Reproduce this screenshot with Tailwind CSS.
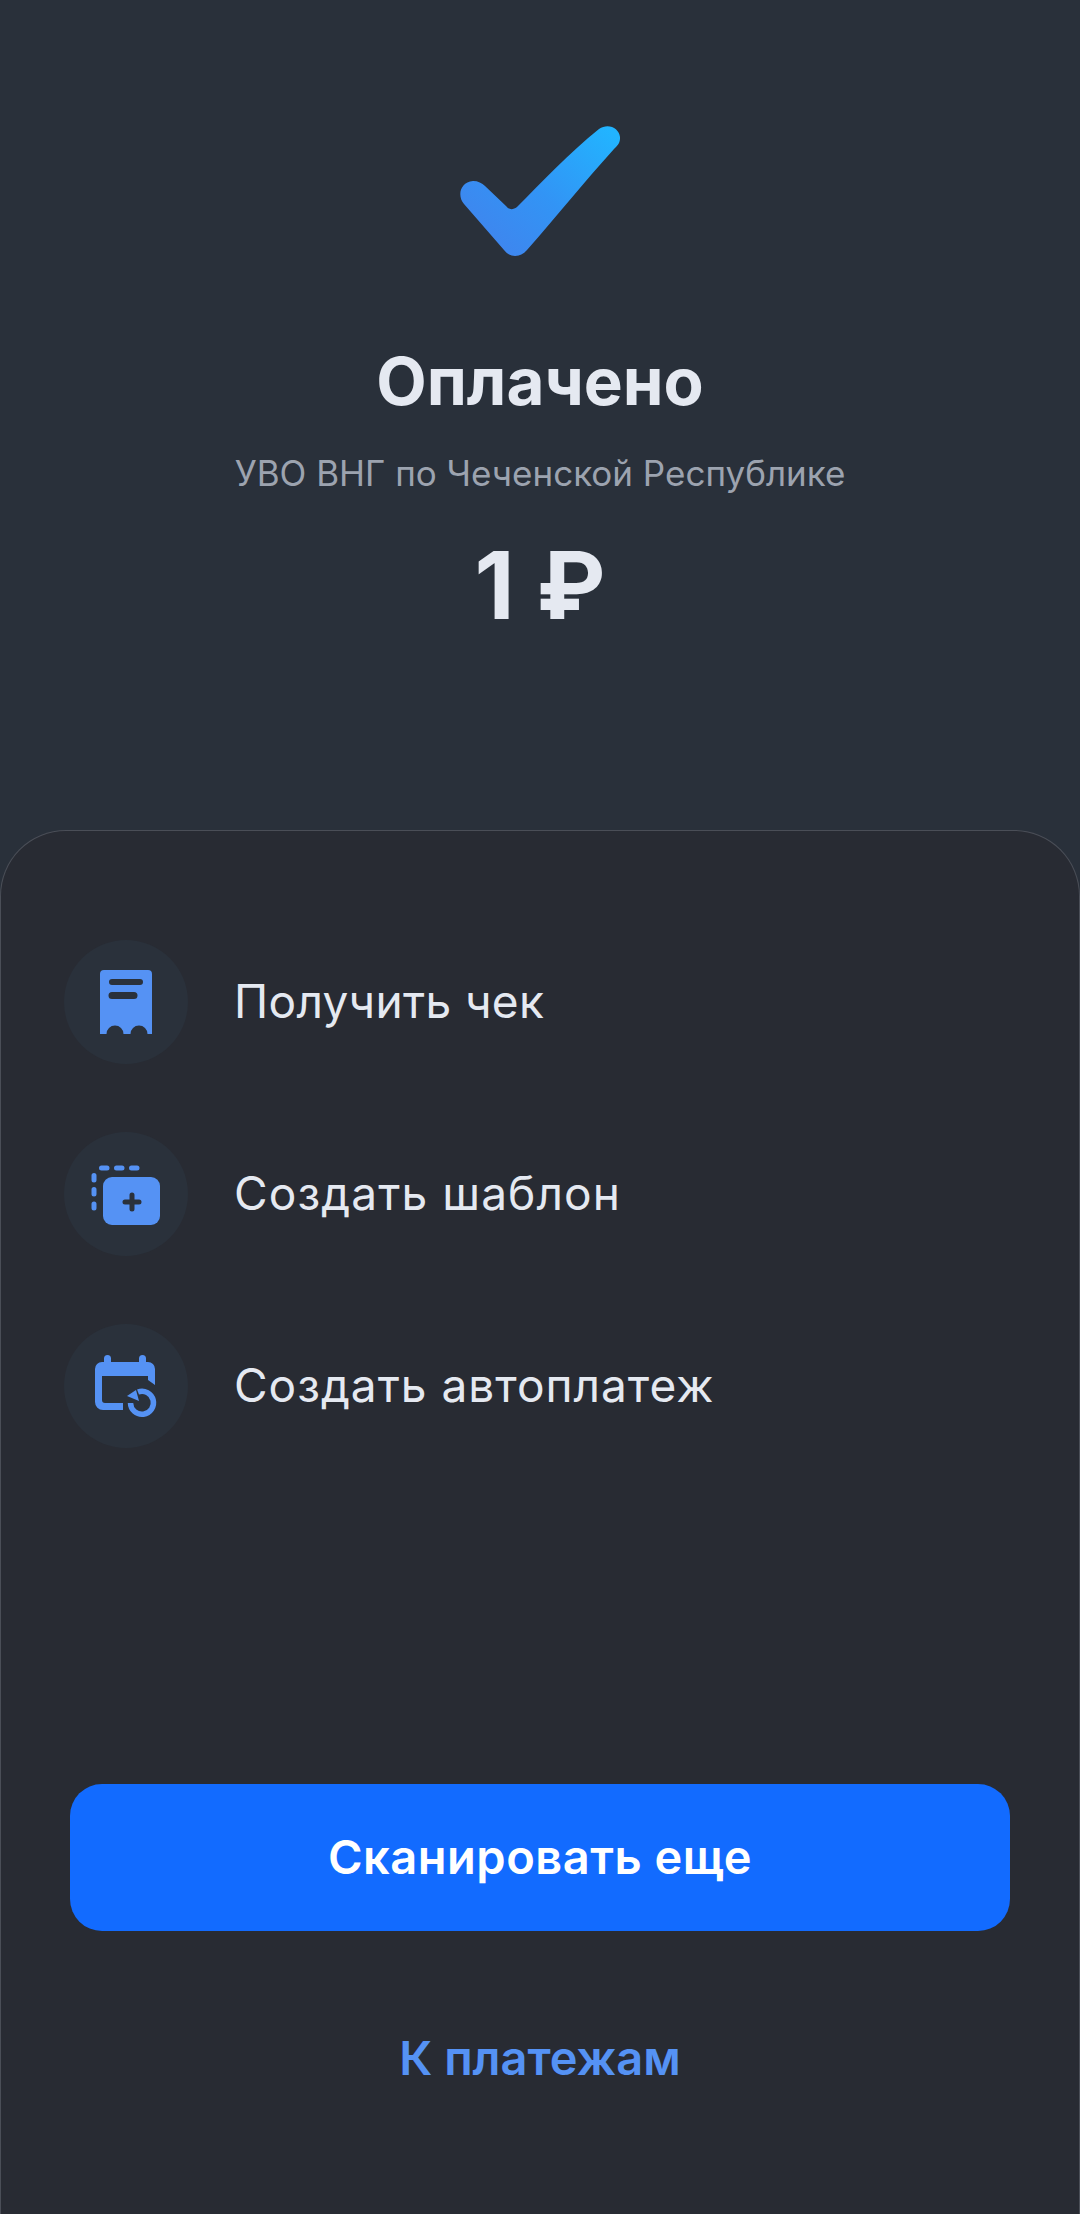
<!DOCTYPE html>
<html lang="ru"><head><meta charset="utf-8">
<script src="https://cdn.jsdelivr.net/npm/@tailwindcss/browser@4"></script>
</head>
<body class="m-0 bg-[#29303a]">
<div class="w-[1080px] h-[2214px] flex flex-col overflow-hidden font-['Inter',sans-serif] bg-[#29303a]">
  <header class="h-[830px] shrink-0 flex flex-col items-center pt-[125px]">
    <svg class="w-[160px] h-[132px] block" viewBox="60 25 160 132">
      <defs><linearGradient id="g" x1="0.1" y1="0.85" x2="0.95" y2="0.05"><stop offset="0" stop-color="#3f85ee"/><stop offset="0.45" stop-color="#3294f5"/><stop offset="1" stop-color="#22b4ff"/></linearGradient></defs>
      <path fill="url(#g)" d="M64 104C57 96 60 82 73 81C78 81 82 83 85 86L106 106C109 110 113 110 117 107C140 84 170 52 199 29C210 21 224 31 219 43C218 45 216 47 214 49C184 82 158 115 127 150C120 158 110 158 104 150Z"/>
    </svg>
    <h1 class="mt-[87px] text-[65.500px] leading-[76px] font-bold text-[#e5e9f1]">Оплачено</h1>
    <p class="mt-[31px] text-[35px] leading-[44px] text-[#9ca3af]">УВО ВНГ по Чеченской Республике</p>
    <p class="mt-[40px] text-[93px] leading-[100px] font-bold text-[#e5e9f1]">1 ₽</p>
  </header>
  <main class="flex-1 flex flex-col bg-[#282b33] border border-[#4a4e57] rounded-t-[66px] border-b-0">
    <ul class="flex flex-col gap-[68px] pt-[109px] pl-[63px]">
      <li class="flex items-center gap-[46px]">
        <span class="w-[124px] h-[124px] rounded-full bg-[#2a313b] shrink-0">
          <svg class="w-[124px] h-[124px] block" viewBox="0 0 124 124"><path fill="#5592f4" fill-rule="evenodd" d="M40 30H84A4 4 0 0 1 88 34V94H83.500A8.500 8.500 0 0 0 66.500 94H59.500A8.500 8.500 0 0 0 42.500 94H36V34A4 4 0 0 1 40 30ZM48 39A3 3 0 0 0 48 45H76A3 3 0 0 0 76 39ZM48 52A3 3 0 0 0 48 59H70A3 3 0 0 0 70 52Z"/></svg>
        </span>
        <span class="pb-[2px] text-[46px] leading-[56px] tracking-[0.35px] text-[#e5e9f1]">Получить чек</span>
      </li>
      <li class="flex items-center gap-[46px]">
        <span class="w-[124px] h-[124px] rounded-full bg-[#2a313b] shrink-0">
          <svg class="w-[124px] h-[124px] block" viewBox="0 0 124 124"><g stroke="#5592f4" stroke-width="5" stroke-linecap="round"><path d="M37.500 36H43M52.500 36H58M67.500 36H73M30 43.500V48M30 57.500V62M30 72V76"/></g><rect x="39" y="45" width="57" height="48" rx="9" fill="#5592f4"/><path d="M68 63V77M61 70H75" stroke="#2a313b" stroke-width="5" stroke-linecap="round"/></svg>
        </span>
        <span class="pb-[2px] text-[46px] leading-[56px] tracking-[1.100px] text-[#e5e9f1]">Создать шаблон</span>
      </li>
      <li class="flex items-center gap-[46px]">
        <span class="w-[124px] h-[124px] rounded-full bg-[#2a313b] shrink-0">
          <svg class="w-[124px] h-[124px] block" viewBox="0 0 124 124"><path fill="#5592f4" d="M43.500 31A3.500 3.500 0 0 1 47 34.500V38H75V34.500A3.500 3.500 0 0 1 82 34.500V38H84A7 7 0 0 1 91 45V61L84 56V52H38V76A3 3 0 0 0 41 79H59V86H39A8 8 0 0 1 31 78V45A7 7 0 0 1 38 38H40V34.500A3.500 3.500 0 0 1 43.500 31Z"/><path fill="none" stroke="#5592f4" stroke-width="5.500" d="M74 68A11.500 11.500 0 1 1 66.500 79"/><path fill="#5592f4" d="M63 72L72 66L75 77Z"/></svg>
        </span>
        <span class="pb-[2px] text-[46px] leading-[56px] tracking-[1px] text-[#e5e9f1]">Создать автоплатеж</span>
      </li>
    </ul>
    <div class="mt-auto px-[69px] pb-[129px] flex flex-col items-center">
      <button class="w-full h-[147px] rounded-[32px] bg-[#126bff] text-white text-[47px] tracking-[0.5px] font-semibold">Сканировать еще</button>
      <a class="mt-[100px] text-[47px] leading-[54px] font-semibold text-[#5592f4]">К платежам</a>
    </div>
  </main>
</div>
</body></html>
